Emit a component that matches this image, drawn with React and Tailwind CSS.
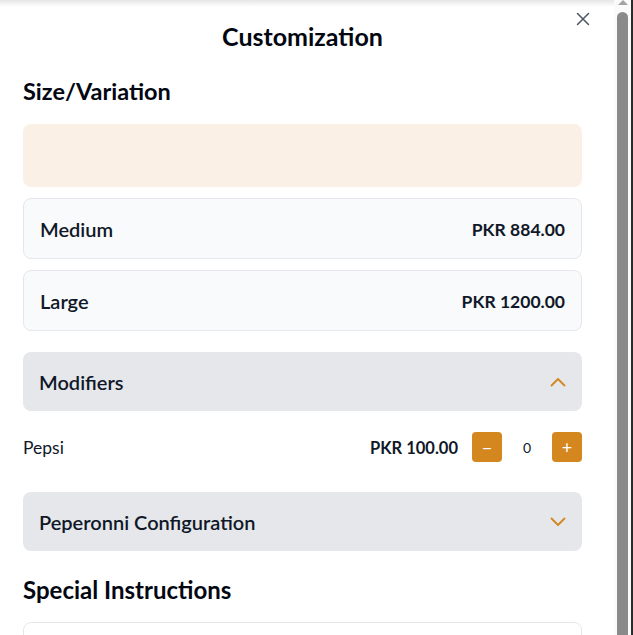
import { useState } from "react";

const ORANGE = "text-[#d4861f]";

const Chevron = ({ up }) => (
  <svg viewBox="0 0 16 10" className={`w-4 h-[10px] ${ORANGE}`} fill="none" stroke="currentColor" strokeWidth="1.8" strokeLinecap="round" strokeLinejoin="round">
    {up ? <path d="M1.5 8.5 8 2l6.5 6.5" /> : <path d="M1.5 1.5 8 8l6.5-6.5" />}
  </svg>
);

const SizeOption = ({ name, price }) => (
  <div className="flex items-center justify-between h-[61px] px-4 rounded-lg border border-gray-200 bg-gray-50">
    <span className="text-[20px] font-semibold text-gray-900">{name}</span>
    <span className="pt-[3px] text-[17.5px] font-bold text-gray-900">{price}</span>
  </div>
);

const SectionHeader = ({ title, open }) => (
  <div className="flex items-center justify-between h-[59px] px-4 rounded-lg bg-gray-200">
    <span className="text-[20px] font-semibold text-gray-900">{title}</span>
    <Chevron up={open} />
  </div>
);

const App = () => {
  const [qty, setQty] = useState(0);

  return (
    <div className="flex w-[633px] h-[635px] overflow-hidden bg-white font-['Lato',sans-serif]">
      {/* Modal body */}
      <div className="relative flex-1 pl-[23px] pr-[32px] pt-[20px]">
        <div className="absolute inset-x-0 top-0 h-[7px] bg-gradient-to-b from-[#e6e6e6] to-white" />
        <button className="absolute top-[12px] right-[24px] text-gray-600">
          <svg viewBox="0 0 14 14" className="w-[14px] h-[14px]" fill="none" stroke="currentColor" strokeWidth="1.5" strokeLinecap="round">
            <path d="M1.5 1.5l11 11M12.5 1.5l-11 11" />
          </svg>
        </button>

        <h2 className="text-[25px] leading-8 font-bold text-center text-gray-950">Customization</h2>

        <h3 className="mt-[25px] text-[23.5px] leading-7 font-bold text-gray-950">Size/Variation</h3>
        <div className="mt-[19px] h-[63px] rounded-lg bg-[#faf0e6]" />
        <div className="flex flex-col gap-[11px] mt-[11px]">
          <SizeOption name="Medium" price="PKR 884.00" />
          <SizeOption name="Large" price="PKR 1200.00" />
        </div>

        <div className="mt-[21px]">
          <SectionHeader title="Modifiers" open />
        </div>
        <div className="flex items-center justify-between mt-[21px] h-[30px]">
          <span className="pt-[2px] text-[17.5px] text-gray-900">Pepsi</span>
          <div className="flex items-center">
            <span className="pt-[2px] text-[16.5px] font-bold text-gray-900">PKR 100.00</span>
            <button onClick={() => setQty(Math.max(0, qty - 1))} className="ml-[14px] flex items-center justify-center w-[30px] h-[30px] rounded bg-[#d4861f] text-white text-lg leading-none">−</button>
            <span className="w-[50px] pt-[2px] text-center text-sm text-gray-900">{qty}</span>
            <button onClick={() => setQty(qty + 1)} className="flex items-center justify-center w-[30px] h-[30px] rounded bg-[#d4861f] text-white text-lg leading-none">+</button>
          </div>
        </div>

        <div className="mt-[30px]">
          <SectionHeader title="Peperonni Configuration" />
        </div>

        <h3 className="mt-[24px] text-2xl leading-[30px] font-bold text-gray-950">Special Instructions</h3>
        <div className="mt-[17px] h-[80px] rounded-lg border border-gray-200" />
      </div>

      {/* Scrollbar */}
      <div className="flex flex-col items-center w-[19px] border-r-2 border-[#2b2b2b] bg-[#fafafa]">
        <div className="w-0 h-0 border-x-[5px] border-x-transparent border-b-[5px] border-b-[#a3a3a3]" />
        <div className="mt-[7px] w-[11px] flex-1 rounded-t-full bg-[#8a8a8a]" />
      </div>
    </div>
  );
};

export default App;
